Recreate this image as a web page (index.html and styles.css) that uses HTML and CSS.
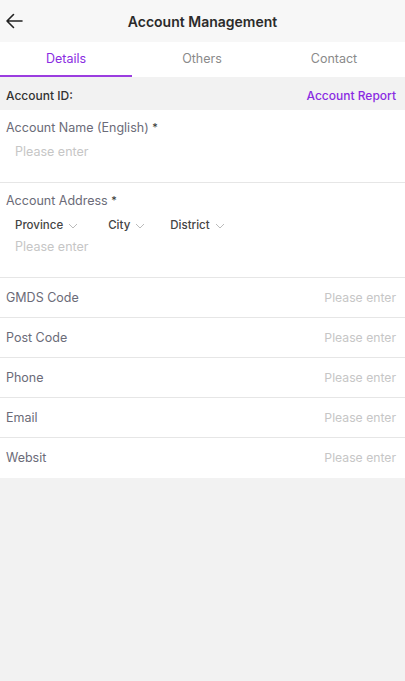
FILE: index.html
```html
<!DOCTYPE html>
<html>
<head>
<meta charset="utf-8">
<link rel="stylesheet" href="styles.css">
</head>
<body>
<div class="app">
  <header class="topbar">
    <svg class="back" width="18" height="16" viewBox="0 0 18 16"><path d="M17 8H2M8.5 1.5L2 8l6.5 6.5" fill="none" stroke="#222" stroke-width="1.6" stroke-linecap="round" stroke-linejoin="round"/></svg>
    <h1 class="title">Account Management</h1>
  </header>
  <nav class="tabs">
    <div class="tab active">Details</div>
    <div class="tab">Others</div>
    <div class="tab">Contact</div>
  </nav>
  <div class="idbar">
    <span class="id-label">Account ID:</span>
    <span class="report">Account Report</span>
  </div>
  <section class="block name-block">
    <div class="label">Account Name (English) <span class="req">*</span></div>
    <div class="ph">Please enter</div>
  </section>
  <section class="block addr-block">
    <div class="label">Account Address <span class="req">*</span></div>
    <div class="selects">
      <span class="sel s1">Province <svg class="chev" width="10" height="6" viewBox="0 0 10 6"><path d="M1 1l4 4 4-4" fill="none" stroke="#bbb" stroke-width="1"/></svg></span>
      <span class="sel s2">City <svg class="chev" width="10" height="6" viewBox="0 0 10 6"><path d="M1 1l4 4 4-4" fill="none" stroke="#bbb" stroke-width="1"/></svg></span>
      <span class="sel">District <svg class="chev" width="10" height="6" viewBox="0 0 10 6"><path d="M1 1l4 4 4-4" fill="none" stroke="#bbb" stroke-width="1"/></svg></span>
    </div>
    <div class="ph">Please enter</div>
  </section>
  <div class="row"><span class="rl">GMDS Code</span><span class="rp">Please enter</span></div>
  <div class="row"><span class="rl">Post Code</span><span class="rp">Please enter</span></div>
  <div class="row"><span class="rl">Phone</span><span class="rp">Please enter</span></div>
  <div class="row"><span class="rl">Email</span><span class="rp">Please enter</span></div>
  <div class="row last"><span class="rl">Websit</span><span class="rp">Please enter</span></div>
</div>
</body>
</html>
```

FILE: styles.css
```css
html, body {
  margin: 0;
  padding: 0;
  background: #f2f2f2;
  font-family: "Inter", "Roboto", sans-serif;
  -webkit-font-smoothing: antialiased;
}
.app {
  width: 405px;
}
.topbar {
  height: 42px;
  background: #f7f7f7;
  display: flex;
  align-items: center;
  justify-content: center;
  position: relative;
}
.back {
  position: absolute;
  left: 5px;
  top: 13px;
}
.title {
  margin: 0;
  font-size: 14px;
  font-weight: 600;
  color: #2b2b2b;
}
.tabs {
  display: grid;
  grid-template-columns: 132px 140px 124px;
  background: #fff;
  height: 35px;
}
.tab {
  display: flex;
  align-items: center;
  justify-content: center;
  font-size: 12.5px;
  color: #8a8a8a;
  box-sizing: border-box;
  padding-bottom: 2px;
}
.tab.active {
  color: #8a2be2;
  border-bottom: 2px solid #9b3de0;
  padding-bottom: 0;
}
.idbar {
  height: 33px;
  box-sizing: border-box;
  background: #f2f2f2;
  display: flex;
  align-items: center;
  justify-content: space-between;
  padding: 3px 9px 0 6px;
  font-size: 12px;
}
.id-label {
  color: #333;
  font-weight: 500;
}
.report {
  color: #8a2be2;
  font-weight: 500;
}
.block {
  background: #fff;
  padding: 0 0 0 6px;
  border-bottom: 1px solid #e6e6e6;
}
.name-block {
  height: 73px;
  padding-top: 9px;
  box-sizing: border-box;
}
.addr-block {
  height: 95px;
  padding-top: 9px;
  box-sizing: border-box;
}
.label {
  font-size: 12.5px;
  color: #6b6b78;
  line-height: 16px;
}
.req {
  color: #333;
  font-size: 11px;
  vertical-align: 1px;
}
.ph {
  font-size: 12.5px;
  color: #c6c6c6;
  padding-left: 9px;
  margin-top: 8px;
  line-height: 16px;
}
.addr-block .ph {
  margin-top: 6px;
}
.selects {
  display: flex;
  padding-left: 9px;
  margin-top: 8px;
  line-height: 16px;
}
.sel {
  font-size: 11.5px;
  color: #444;
  font-weight: 500;
  display: inline-flex;
  align-items: center;
  gap: 5px;
}
.s1 { margin-right: 30px; }
.s2 { margin-right: 25px; }
.chev { margin-top: 1px; }
.row {
  height: 40px;
  background: #fff;
  display: flex;
  align-items: center;
  justify-content: space-between;
  padding: 0 9px 1px 6px;
  border-bottom: 1px solid #e6e6e6;
  box-sizing: border-box;
}
.row.last { border-bottom: none; }
.rl {
  font-size: 12.5px;
  color: #6b6b78;
}
.rp {
  font-size: 12.2px;
  color: #c6c6c6;
}
```
